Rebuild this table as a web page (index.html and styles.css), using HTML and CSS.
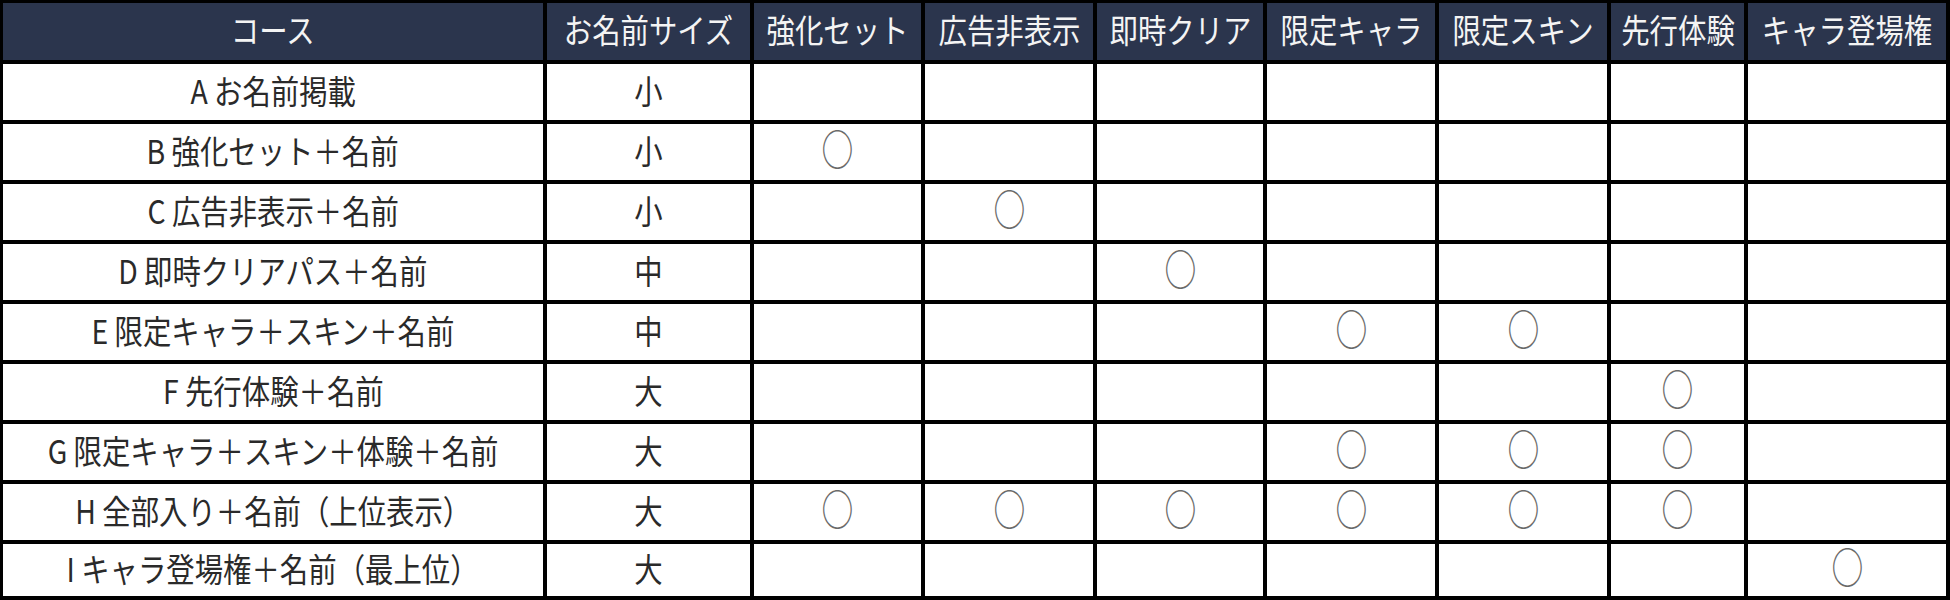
FILE: index.html
```html
<!DOCTYPE html>
<html lang="ja">
<head>
<meta charset="utf-8">
<title>コース一覧</title>
<link rel="stylesheet" href="styles.css">
</head>
<body>
<div class="table">
  <div class="cell head"><span class="t">コース</span></div>
  <div class="cell head"><span class="t">お名前サイズ</span></div>
  <div class="cell head"><span class="t">強化セット</span></div>
  <div class="cell head"><span class="t">広告非表示</span></div>
  <div class="cell head"><span class="t">即時クリア</span></div>
  <div class="cell head"><span class="t">限定キャラ</span></div>
  <div class="cell head"><span class="t">限定スキン</span></div>
  <div class="cell head"><span class="t">先行体験</span></div>
  <div class="cell head"><span class="t">キャラ登場権</span></div>

  <div class="cell"><span class="t">A お名前掲載</span></div>
  <div class="cell"><span class="t">小</span></div>
  <div class="cell"></div><div class="cell"></div><div class="cell"></div><div class="cell"></div><div class="cell"></div><div class="cell"></div><div class="cell"></div>

  <div class="cell"><span class="t">B 強化セット＋名前</span></div>
  <div class="cell"><span class="t">小</span></div>
  <div class="cell"><span class="mark">○</span></div><div class="cell"></div><div class="cell"></div><div class="cell"></div><div class="cell"></div><div class="cell"></div><div class="cell"></div>

  <div class="cell"><span class="t">C 広告非表示＋名前</span></div>
  <div class="cell"><span class="t">小</span></div>
  <div class="cell"></div><div class="cell"><span class="mark">○</span></div><div class="cell"></div><div class="cell"></div><div class="cell"></div><div class="cell"></div><div class="cell"></div>

  <div class="cell"><span class="t">D 即時クリアパス＋名前</span></div>
  <div class="cell"><span class="t">中</span></div>
  <div class="cell"></div><div class="cell"></div><div class="cell"><span class="mark">○</span></div><div class="cell"></div><div class="cell"></div><div class="cell"></div><div class="cell"></div>

  <div class="cell"><span class="t">E 限定キャラ＋スキン＋名前</span></div>
  <div class="cell"><span class="t">中</span></div>
  <div class="cell"></div><div class="cell"></div><div class="cell"></div><div class="cell"><span class="mark">○</span></div><div class="cell"><span class="mark">○</span></div><div class="cell"></div><div class="cell"></div>

  <div class="cell"><span class="t">F 先行体験＋名前</span></div>
  <div class="cell"><span class="t">大</span></div>
  <div class="cell"></div><div class="cell"></div><div class="cell"></div><div class="cell"></div><div class="cell"></div><div class="cell"><span class="mark">○</span></div><div class="cell"></div>

  <div class="cell"><span class="t">G 限定キャラ＋スキン＋体験＋名前</span></div>
  <div class="cell"><span class="t">大</span></div>
  <div class="cell"></div><div class="cell"></div><div class="cell"></div><div class="cell"><span class="mark">○</span></div><div class="cell"><span class="mark">○</span></div><div class="cell"><span class="mark">○</span></div><div class="cell"></div>

  <div class="cell"><span class="t">H 全部入り＋名前（上位表示）</span></div>
  <div class="cell"><span class="t">大</span></div>
  <div class="cell"><span class="mark">○</span></div><div class="cell"><span class="mark">○</span></div><div class="cell"><span class="mark">○</span></div><div class="cell"><span class="mark">○</span></div><div class="cell"><span class="mark">○</span></div><div class="cell"><span class="mark">○</span></div><div class="cell"></div>

  <div class="cell"><span class="t">I キャラ登場権＋名前（最上位）</span></div>
  <div class="cell"><span class="t">大</span></div>
  <div class="cell"></div><div class="cell"></div><div class="cell"></div><div class="cell"></div><div class="cell"></div><div class="cell"></div><div class="cell"><span class="mark">○</span></div>
</div>
</body>
</html>
```

FILE: styles.css
```css
html, body {
  margin: 0;
  padding: 0;
  background: #000;
}

.table {
  width: 1950px;
  height: 600px;
  box-sizing: border-box;
  display: grid;
  grid-template-columns: 540px 203px 167px 168px 166px 168px 168px 133px 198px;
  grid-template-rows: 57px repeat(8, 56px) 52px;
  gap: 4px;
  padding: 3px 4px 4px 3px;
  background: #000;
  font-family: "Noto Sans CJK JP", "Noto Sans", sans-serif;
}

.cell {
  background: #fff;
  color: #2a2a2a;
  display: flex;
  align-items: center;
  justify-content: center;
}

.cell.head {
  background: #2b354d;
  color: #f4f4f4;
}

.t {
  display: inline-block;
  font-size: 33px;
  line-height: 1;
  white-space: nowrap;
  transform: translateY(-2px) scaleX(0.86);
}

.mark {
  display: inline-block;
  font-size: 43px;
  line-height: 1;
  color: #6a6a6a;
  transform: translateY(-5px) scaleX(0.74);
}
```
